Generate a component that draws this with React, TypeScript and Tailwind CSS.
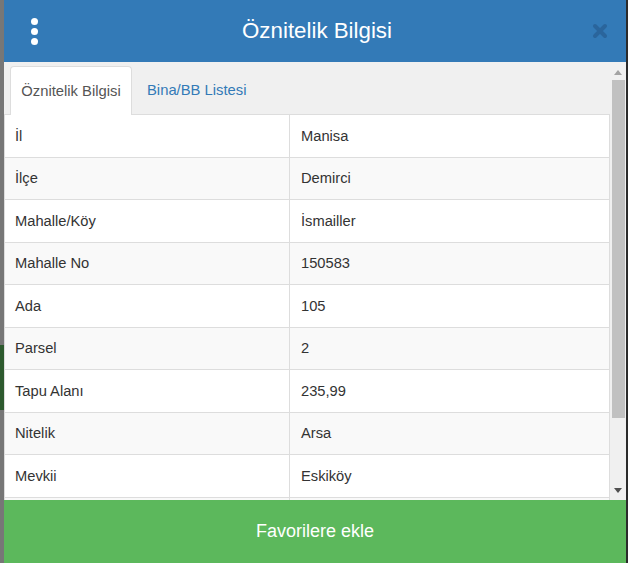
import React from 'react';

const rows: [string, string][] = [
  ['İl', 'Manisa'],
  ['İlçe', 'Demirci'],
  ['Mahalle/Köy', 'İsmailler'],
  ['Mahalle No', '150583'],
  ['Ada', '105'],
  ['Parsel', '2'],
  ['Tapu Alanı', '235,99'],
  ['Nitelik', 'Arsa'],
  ['Mevkii', 'Eskiköy'],
  ['', ''],
];

export default function App() {
  return (
    <div
      className="flex h-[563px] w-[628px] overflow-hidden bg-[#f0f0f0]"
      style={{ fontFamily: '"Liberation Sans", Arial, sans-serif' }}
    >
      {/* map edge behind the panel */}
      <div className="flex w-[4px] flex-col bg-[#777]">
        <div className="h-[345px]" />
        <div className="h-[65px] bg-[#2d5a2e]" />
      </div>

      <div className="flex w-[622px] flex-col">
        <header className="flex h-[62px] items-center justify-between bg-[#337ab7] px-[27px] text-white">
          <div className="flex flex-col gap-[3px]">
            <span className="h-[7px] w-[7px] rounded-full bg-white" />
            <span className="h-[7px] w-[7px] rounded-full bg-white" />
            <span className="h-[7px] w-[7px] rounded-full bg-white" />
          </div>
          <h1 className="pl-[4px] text-[22.3px]">Öznitelik Bilgisi</h1>
          <svg width="16" height="16" viewBox="0 0 16 16" className="-mr-[9px]">
            <path d="M3 3 L13 13 M13 3 L3 13" stroke="#2a659c" strokeWidth="4" strokeLinecap="round" />
          </svg>
        </header>

        <div className="flex h-[438px]">
          <div className="w-[606px] overflow-hidden pt-[4px]">
            <div className="flex h-[48px] pl-[6px] text-[14.8px]">
              <div className="relative z-10 flex h-[49px] w-[122px] items-center justify-center rounded-t-[4px] border border-b-0 border-[#ddd] bg-white text-[#555]">
                Öznitelik Bilgisi
              </div>
              <div className="ml-[2px] flex items-center px-[13px] text-[#337ab7]">Bina/BB Listesi</div>
            </div>
            <div className="w-[606px] border border-[#ddd] text-[14.7px] text-[#333]">
              {rows.map(([label, value], i) => (
                <div
                  key={i}
                  className={`flex h-[42.5px] items-center border-b border-[#ddd] ${i % 2 === 1 ? 'bg-[#f9f9f9]' : 'bg-white'}`}
                >
                  <div className="flex h-full w-[285px] items-center border-r border-[#ddd] pl-[10px]">{label}</div>
                  <div className="pl-[11px]">{value}</div>
                </div>
              ))}
            </div>
          </div>

          {/* scrollbar */}
          <div className="flex w-[16px] flex-col items-center bg-[#f0f0f0]">
            <svg width="8" height="5" viewBox="0 0 8 5" className="mt-[8px]">
              <path d="M0 5 L4 0 L8 5 Z" fill="#a3a3a3" />
            </svg>
            <div className="mt-[5px] h-[338px] w-[13px] bg-[#c1c1c1]" />
            <div className="flex-1" />
            <svg width="8" height="5" viewBox="0 0 8 5" className="mb-[7px]">
              <path d="M0 0 L8 0 L4 5 Z" fill="#505050" />
            </svg>
          </div>
        </div>

        <button className="flex h-[63px] items-center justify-center bg-[#5cb85c] text-[18px] text-white">
          Favorilere ekle
        </button>
      </div>

      <div className="w-[2px] bg-[#2b2b2b]" />
    </div>
  );
}
